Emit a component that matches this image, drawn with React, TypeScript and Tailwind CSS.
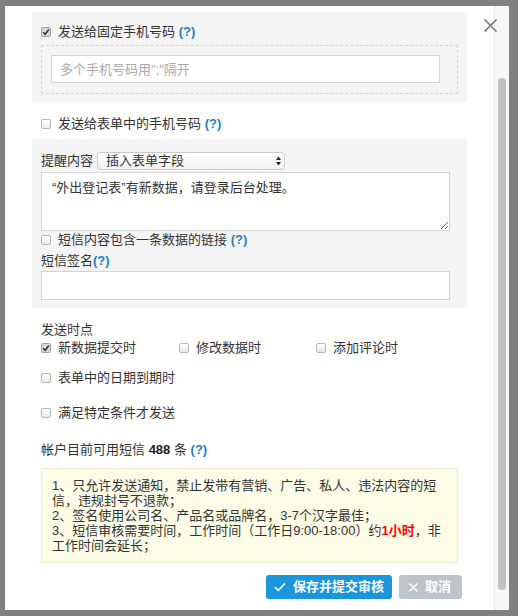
import React from 'react';

const Help: React.FC = () => <span className="font-bold text-[#1f7fc4]">(?)</span>;

const Check: React.FC<{ checked?: boolean }> = ({ checked }) => (
  <span
    className={`flex h-[10px] w-[10px] shrink-0 items-center justify-center rounded-[2px] border ${
      checked ? 'border-[#a2a2a2] bg-[#d9d9d9]' : 'border-[#b6b6b6] bg-linear-to-b from-white to-[#ebebeb]'
    }`}
  >
    {checked && (
      <svg width="8" height="8" viewBox="0 0 8 8">
        <path d="M1.2 4.2 L3.2 6.2 L6.8 1.6" fill="none" stroke="#333" strokeWidth="1.6" />
      </svg>
    )}
  </span>
);

const CheckRow: React.FC<{ checked?: boolean; className?: string; children: React.ReactNode }> = ({
  checked,
  className = '',
  children,
}) => (
  <label className={`flex items-center gap-[7px] ${className}`}>
    <Check checked={checked} />
    <span>{children}</span>
  </label>
);

export default function App() {
  return (
    <div className="h-[616px] w-[518px] bg-[#7f7f7f] pl-[5px] pt-[6px] font-['Liberation_Sans','Noto_Sans_CJK_SC',sans-serif] text-[13px] text-[#333]">
      <div className="relative flex h-[604px] w-[504px] bg-white">
        <div className="flex-1 px-[27px] pt-[6px]">
          {/* fixed numbers */}
          <div className="bg-[#f5f5f5] px-[9px] pb-[8px] pt-[10px]">
            <CheckRow checked className="h-[20px]">
              发送给固定手机号码 <Help />
            </CheckRow>
            <div className="mt-[3px] w-[417px] border border-dashed border-[#d6d6d6] pb-[10px] pl-[9px] pt-[9px]">
              <input
                placeholder='多个手机号码用";"隔开'
                className="block h-[28px] w-[389px] border border-[#d4d4d4] bg-white px-[8px] outline-none placeholder:text-[#aaa]"
              />
            </div>
          </div>

          <CheckRow className="mt-[12px] h-[20px] pl-[9px]">
            发送给表单中的手机号码 <Help />
          </CheckRow>

          {/* content */}
          <div className="mt-[5px] bg-[#f5f5f5] px-[9px] pb-[8px] pt-[13px]">
            <div className="flex h-[18px] items-center gap-[4px]">
              <span>提醒内容</span>
              <div className="flex h-[18px] w-[188px] items-center justify-between rounded-[4px] border border-[#c9c9c9] bg-linear-to-b from-white to-[#f3f3f3] pl-[8px] pr-[3px]">
                <span>插入表单字段</span>
                <svg width="5" height="10" viewBox="0 0 5 10">
                  <path d="M0 4 L2.5 0.5 L5 4 Z M0 6 L2.5 9.5 L5 6 Z" fill="#222" />
                </svg>
              </div>
            </div>
            <textarea
              defaultValue="“外出登记表”有新数据，请登录后台处理。"
              className="mt-[2px] block h-[59px] w-[409px] border border-[#d4d4d4] bg-white px-[10px] pt-[6px] leading-[18px] outline-none"
            />
            <CheckRow className="h-[18px]">
              短信内容包含一条数据的链接 <Help />
            </CheckRow>
            <div className="mt-[2px] flex h-[20px] items-center">
              短信签名
              <Help />
            </div>
            <input className="block h-[29px] w-[409px] border border-[#d4d4d4] bg-white outline-none" />
          </div>

          {/* timing */}
          <div className="pl-[9px]">
            <div className="mt-[12px] flex h-[19px] items-center">发送时点</div>
            <div className="flex h-[18px]">
              <CheckRow checked className="w-[138px]">新数据提交时</CheckRow>
              <CheckRow className="w-[137px]">修改数据时</CheckRow>
              <CheckRow>添加评论时</CheckRow>
            </div>
            <CheckRow className="mt-[12px] h-[18px]">表单中的日期到期时</CheckRow>
            <CheckRow className="mt-[17px] h-[18px]">满足特定条件才发送</CheckRow>
            <div className="mt-[19px] flex h-[18px] items-center">
              帐户目前可用短信&nbsp;<span className="font-bold text-[#222]">488</span>&nbsp;条&nbsp;<Help />
            </div>

            <div className="mt-[9px] w-[417px] whitespace-nowrap border border-[#ecebd2] bg-[#fefde7] pb-[9px] pl-[10px] pt-[9px] leading-[15px]">
              1、只允许发送通知，禁止发带有营销、广告、私人、违法内容的短
              <br />
              信，违规封号不退款；
              <br />
              2、签名使用公司名、产品名或品牌名，3-7个汉字最佳；
              <br />
              3、短信审核需要时间，工作时间（工作日9:00-18:00）约
              <span className="font-bold text-[#f00]">1小时</span>，非
              <br />
              工作时间会延长；
            </div>
          </div>

          <div className="mt-[12px] flex justify-end gap-[7px] pr-[5px]">
            <button className="flex h-[24px] w-[126px] items-center gap-[7px] rounded-[3px] bg-[#1a96dc] pl-[8px] font-bold text-white">
              <svg width="12" height="10" viewBox="0 0 12 10">
                <path d="M1 5.2 L4.3 8.4 L11 1.4" fill="none" stroke="#fff" strokeWidth="1.6" />
              </svg>
              保存并提交审核
            </button>
            <button className="flex h-[24px] w-[63px] items-center gap-[7px] rounded-[3px] bg-[#bfc4c8] pl-[10px] font-bold text-white">
              <svg width="9" height="9" viewBox="0 0 9 9">
                <path d="M0.5 0.5 L8.5 8.5 M8.5 0.5 L0.5 8.5" stroke="#fff" strokeWidth="1.5" />
              </svg>
              取消
            </button>
          </div>
        </div>

        {/* scrollbar */}
        <div className="w-[15px] border-l border-[#e6e6e6] bg-[#f7f7f7] pt-[72px]">
          <div className="ml-[3px] h-[512px] w-[8px] rounded-full bg-[#c1c1c1]" />
        </div>

        <svg className="absolute left-[479px] top-[13px]" width="13" height="13" viewBox="0 0 13 13">
          <path d="M0.5 0.5 L12.5 12.5 M12.5 0.5 L0.5 12.5" stroke="#6e6e6e" strokeWidth="1.5" />
        </svg>
      </div>
    </div>
  );
}
